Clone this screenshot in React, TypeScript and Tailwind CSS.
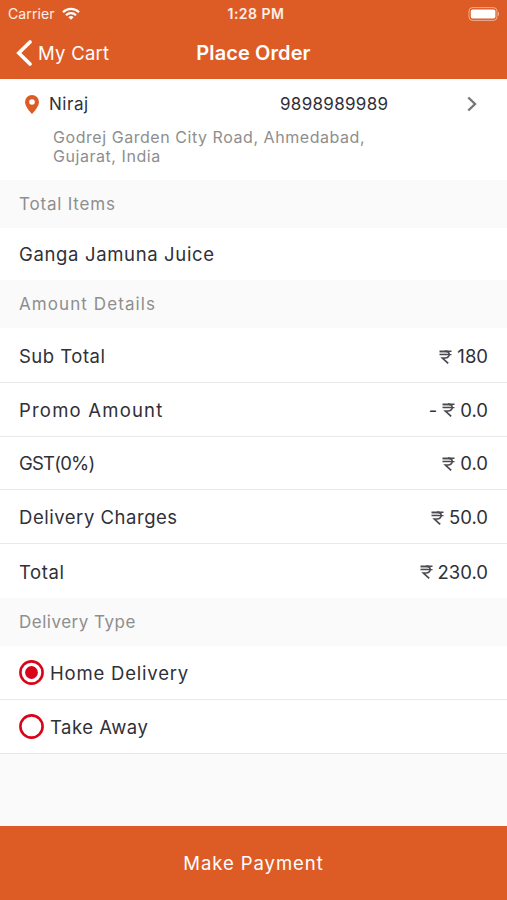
interface AmountRow {
  label: string;
  value: string;
  labelClass: string;
}

const amounts: AmountRow[] = [
  { label: 'Sub Total', value: '180', labelClass: 'tracking-[0.5px]' },
  { label: 'Promo Amount', value: '0.0', labelClass: 'tracking-[1.2px]' },
  { label: 'GST(0%)', value: '0.0', labelClass: 'tracking-[-0.8px]' },
  { label: 'Delivery Charges', value: '50.0', labelClass: 'tracking-[0.53px]' },
  { label: 'Total', value: '230.0', labelClass: 'tracking-[0.6px]' },
];

function StatusBar() {
  return (
    <div className="grid h-[27px] grid-cols-3 items-center px-2 text-[14px] text-white/90">
      <div className="flex items-center gap-[7px]">
        <span className="tracking-[0.1px]">Carrier</span>
        <svg width="18" height="13" viewBox="0 0 18 13" fill="none" stroke="white" strokeWidth="2.2">
          <path d="M1 5.2a11.3 11.3 0 0 1 16 0" />
          <path d="M4 8.3a7 7 0 0 1 10 0" />
          <path d="M6.4 10.2a3.7 3.7 0 0 1 5.2 0L9 12.8z" fill="white" stroke="none" />
        </svg>
      </div>
      <span className="pl-[5px] text-center text-[14px] font-semibold tracking-[0.5px]">1:28 PM</span>
      <svg className="justify-self-end" width="32" height="14" viewBox="0 0 32 14">
        <rect x="2" y="0.6" width="28" height="12.8" rx="3.6" fill="none" stroke="white" strokeOpacity="0.5" />
        <rect x="3.8" y="2.4" width="24.6" height="9.2" rx="1.8" fill="white" />
        <path d="M31 4.8a2.6 2.6 0 0 1 0 4.4z" fill="white" fillOpacity="0.5" />
      </svg>
    </div>
  );
}

function NavBar() {
  return (
    <div className="grid h-[52px] grid-cols-[1fr_auto_1fr] items-center text-white">
      <button className="flex items-center gap-[6px] pl-4">
        <svg
          width="16"
          height="26"
          viewBox="0 0 16 26"
          fill="none"
          stroke="white"
          strokeWidth="3.6"
          strokeLinecap="round"
        >
          <path d="M14 2 2.8 13 14 24" />
        </svg>
        <span className="pt-[2px] text-[18.5px] tracking-[0.25px]">My Cart</span>
      </button>
      <h1 className="pb-px text-[20px] font-semibold tracking-[0.1px]">Place Order</h1>
    </div>
  );
}

function SectionTitle({ title, className }: { title: string; className: string }) {
  return (
    <h2 className={`flex h-12 items-center bg-[#fafafa] px-[19px] pt-[2px] text-[17px] text-[#8e8e8e] ${className}`}>
      {title}
    </h2>
  );
}

function Rupee() {
  return (
    <svg width="13" height="14" viewBox="0 0 13 14" fill="none" stroke="#4a4a50" strokeWidth="1.4">
      <path d="M0.5 1.2h12M0.5 4.6h12" />
      <path d="M0.5 2.9h8" stroke="#a0a0a4" />
      <path d="M6 1.2c5.6 0 5.6 6.8 0 6.8H3.4l5.8 5.4" strokeWidth="1.7" />
    </svg>
  );
}

function Radio({ checked }: { checked: boolean }) {
  return (
    <svg width="25" height="25" viewBox="0 0 25 25">
      <circle cx="12.5" cy="12.5" r="11.1" fill="none" stroke="#d9041c" strokeWidth="2.6" />
      {checked && <circle cx="12.5" cy="12.5" r="6.4" fill="#d9041c" />}
    </svg>
  );
}

export default function App() {
  return (
    <div className="flex h-[900px] w-[507px] flex-col bg-[#fafafa] font-['Inter','Liberation_Sans',sans-serif] text-[#303038]">
      <header className="h-[79px] bg-[#dd5c26]">
        <StatusBar />
        <NavBar />
      </header>

      {/* Delivery address */}
      <section className="h-[101px] bg-white pt-[13px]">
        <div className="flex h-6 items-center pr-[30px] pl-[25px] text-[17px]">
          <svg width="14" height="19" viewBox="0 0 14 19">
            <path
              d="M7 0a7 7 0 0 0-7 7c0 5 7 12 7 12s7-7 7-12a7 7 0 0 0-7-7zm0 4.2a2.8 2.8 0 1 1 0 5.6 2.8 2.8 0 0 1 0-5.6z"
              fill="#dd5c26"
            />
          </svg>
          <span className="ml-[10px] w-[231px] pt-px tracking-[0.55px]">Niraj</span>
          <span className="pt-px tracking-[0.3px]">9898989989</span>
          <svg className="ml-auto" width="10" height="16" viewBox="0 0 10 16" fill="none" stroke="#77777b" strokeWidth="2.4">
            <path d="M1.3 1.5 8 8l-6.7 6.5" />
          </svg>
        </div>
        <p className="ml-[53px] pt-[12px] text-[16px] leading-[19px] tracking-[0.55px] text-[#8e8e8e]">
          Godrej Garden City Road, Ahmedabad,
          <br />
          Gujarat, India
        </p>
      </section>

      <SectionTitle title="Total Items" className="tracking-[0.8px]" />
      <div className="flex h-[52px] items-center bg-white px-[19px] pt-[2px] text-[18.5px] tracking-[0.65px]">
        Ganga Jamuna Juice
      </div>

      <SectionTitle title="Amount Details" className="tracking-[1.08px]" />
      <ul className="h-[270px] bg-white pt-px text-[18.5px]">
        {amounts.map((row, i) => (
          <li
            key={row.label}
            className={`flex h-[53.8px] items-center justify-between px-[19px] pt-[2.6px] ${
              i < amounts.length - 1 ? 'border-b border-[#e9e9eb]' : ''
            }`}
          >
            <span className={row.labelClass}>{row.label}</span>
            <span className="flex items-center gap-[5px]">
              {row.label === 'Promo Amount' && <span>-</span>}
              <Rupee />
              <span>{row.value}</span>
            </span>
          </li>
        ))}
      </ul>

      <SectionTitle title="Delivery Type" className="tracking-[0.5px]" />
      <div className="bg-white text-[18.5px]">
        <label className="flex h-[54px] items-center gap-[6px] border-b border-[#e9e9eb] px-[19px]">
          <Radio checked />
          <span className="pt-[2px] tracking-[0.8px]">Home Delivery</span>
        </label>
        <label className="flex h-[54px] items-center gap-[6px] border-b border-[#e5e5e7] px-[19px]">
          <Radio checked={false} />
          <span className="pt-[2px] tracking-[0.5px]">Take Away</span>
        </label>
      </div>

      <button className="mt-auto h-[74px] bg-[#dd5c26] pt-[2px] text-[18.5px] tracking-[0.93px] text-white">
        Make Payment
      </button>
    </div>
  );
}
